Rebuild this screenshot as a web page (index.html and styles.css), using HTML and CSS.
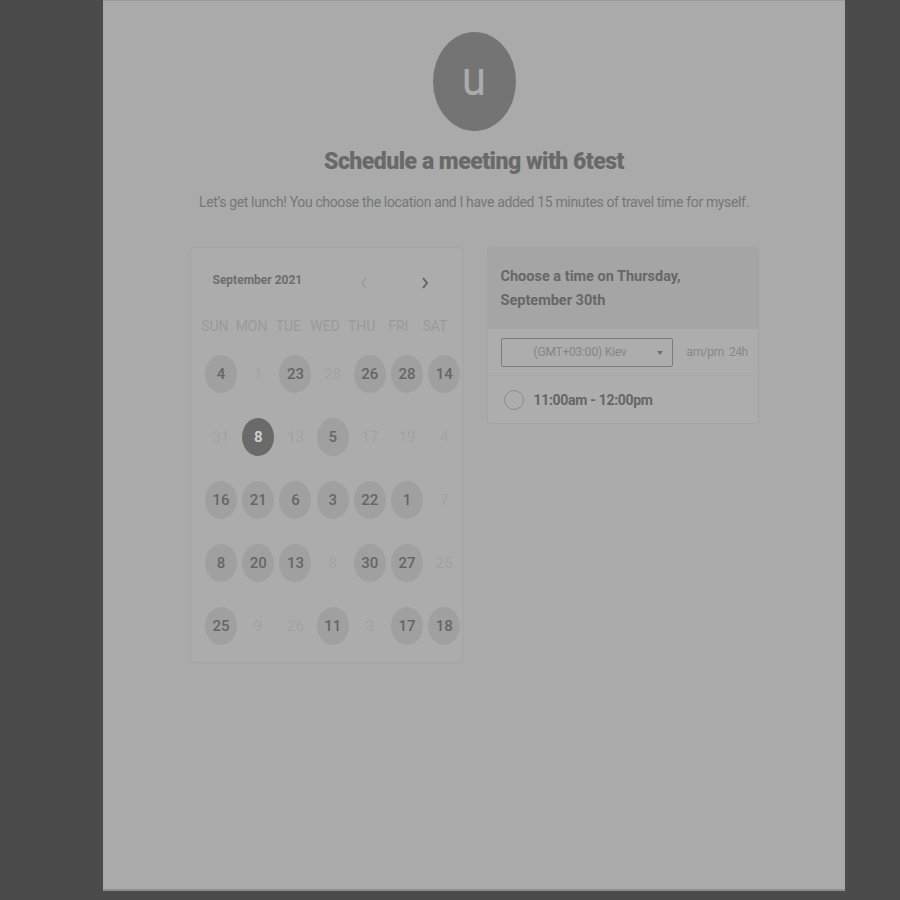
FILE: index.html
```html
<!DOCTYPE html>
<html>
<head>
<meta charset="utf-8">
<link rel="stylesheet" href="styles.css">
</head>
<body>
<div class="panel">
  <div class="avatar"><span>u</span></div>
  <h1 class="title">Schedule a meeting with 6test</h1>
  <p class="subtitle">Let’s get lunch! You choose the location and I have added 15 minutes of travel time for myself.</p>
  <div class="cards">
    <div class="calendar">
      <div class="cal-head">
        <span class="month">September 2021</span>
        <span class="nav prev"><svg width="10" height="14" viewBox="0 0 10 14"><path d="M7 2 L3 7 L7 12" fill="none" stroke="currentColor" stroke-width="1.6"/></svg></span>
        <span class="nav next"><svg width="10" height="14" viewBox="0 0 10 14"><path d="M3 2 L7 7 L3 12" fill="none" stroke="currentColor" stroke-width="2"/></svg></span>
      </div>
      <div class="grid weekdays">
        <span>SUN</span><span>MON</span><span>TUE</span><span>WED</span><span>THU</span><span>FRI</span><span>SAT</span>
      </div>
      <div class="grid days">
        <span class="d on">4</span><span class="d">1</span><span class="d on">23</span><span class="d">28</span><span class="d on">26</span><span class="d on">28</span><span class="d on">14</span>
        <span class="d">31</span><span class="d sel">8</span><span class="d">13</span><span class="d on">5</span><span class="d">17</span><span class="d">19</span><span class="d">4</span>
        <span class="d on">16</span><span class="d on">21</span><span class="d on">6</span><span class="d on">3</span><span class="d on">22</span><span class="d on">1</span><span class="d">7</span>
        <span class="d on">8</span><span class="d on">20</span><span class="d on">13</span><span class="d">8</span><span class="d on">30</span><span class="d on">27</span><span class="d">25</span>
        <span class="d on">25</span><span class="d">9</span><span class="d">26</span><span class="d on">11</span><span class="d">3</span><span class="d on">17</span><span class="d on">18</span>
      </div>
    </div>
    <div class="times">
      <div class="times-head">Choose a time on Thursday,<br>September 30th</div>
      <div class="controls">
        <div class="select"><span>(GMT+03:00) Kiev</span><span class="caret"></span></div>
        <span class="fmt">am/pm&nbsp;&nbsp;24h</span>
      </div>
      <div class="slot">
        <span class="radio"></span>
        <span class="slot-text">11:00am - 12:00pm</span>
      </div>
    </div>
  </div>
</div>
</body>
</html>
```
FILE: styles.css
```css
html, body { margin: 0; padding: 0; }
body {
  background: #4b4b4b;
  font-family: Roboto, "Liberation Sans", sans-serif;
  width: 900px;
  height: 900px;
  overflow: hidden;
}
.panel {
  margin-left: 103px;
  width: 742px;
  height: 891px;
  background: #aaaaaa;
  border-top: 1px solid #9a9a9a;
  border-bottom: 2px solid #8f8f8f;
  box-sizing: border-box;
  padding-top: 31px;
  display: flex;
  flex-direction: column;
  align-items: center;
}
.avatar {
  width: 83px;
  height: 99px;
  border-radius: 50%;
  background: #747474;
  display: flex;
  align-items: center;
  justify-content: center;
}
.avatar span {
  color: #ababab;
  font-size: 44px;
  line-height: 1;
  margin-top: -8px;
  transform: scaleY(1.1);
}
.title {
  margin: 19px 0 0;
  font-size: 23px;
  font-weight: 900;
  color: #696969;
  line-height: 24px;
  letter-spacing: -0.5px;
}
.subtitle {
  margin: 20px 0 0;
  font-size: 14px;
  color: #777;
  line-height: 16px;
  letter-spacing: -0.35px;
}
.cards {
  margin-top: 38px;
  display: flex;
  gap: 26px;
  align-items: flex-start;
}
.calendar {
  width: 271px;
  height: 414px;
  box-sizing: border-box;
  background: #acacac;
  border-radius: 3px;
  box-shadow: 0 0 2px rgba(0,0,0,0.12);
  padding: 22px 0 0 12px;
}
.cal-head {
  display: flex;
  align-items: center;
  height: 20px;
}
.month {
  margin-left: 10px;
  font-size: 12px;
  font-weight: 700;
  color: #6e6e6e;
  width: 146px;
}
.nav { display: flex; align-items: center; margin-top: 6px; }
.prev { color: #9a9a9a; margin-right: 51px; }
.next { color: #666; }
.grid {
  display: grid;
  grid-template-columns: repeat(7, 37.2px);
}
.weekdays {
  margin-top: 26px;
  margin-left: -6px;
  grid-template-columns: repeat(7, 36.7px);
  height: 20px;
  align-items: center;
}
.weekdays span {
  text-align: center;
  font-size: 14px;
  color: #9a9a9a;
  letter-spacing: -0.1px;
}
.days {
  margin-top: 6px;
  grid-auto-rows: 63px;
  align-items: center;
  justify-items: center;
}
.d {
  width: 32px;
  height: 38px;
  border-radius: 50%;
  display: flex;
  align-items: center;
  justify-content: center;
  font-size: 15px;
  color: #a2a2a2;
}
.d.on {
  background: #a0a0a0;
  color: #666;
  font-weight: 500;
}
.d.sel {
  background: #6a6a6a;
  color: #cfcfcf;
  font-weight: 700;
}
.times {
  width: 270px;
  background: #adadad;
  border-radius: 3px;
  box-shadow: 0 0 2px rgba(0,0,0,0.12);
  overflow: hidden;
}
.times-head {
  background: #a5a5a5;
  padding: 17px 13px 16px;
  font-size: 14.5px;
  font-weight: 700;
  color: #676767;
  line-height: 24px;
}
.controls {
  height: 47px;
  display: flex;
  align-items: center;
  padding-left: 13px;
  box-sizing: border-box;
  border-bottom: 1px solid #a8a8a8;
}
.select {
  width: 172px;
  height: 29px;
  box-sizing: border-box;
  border: 1px solid #7c7c7c;
  border-radius: 2px;
  display: flex;
  align-items: center;
  padding-left: 32px;
  font-size: 12px;
  color: #858585;
  letter-spacing: -0.2px;
  position: relative;
}
.caret {
  position: absolute;
  right: 9px;
  top: 12px;
  width: 0;
  height: 0;
  border-left: 3px solid transparent;
  border-right: 3px solid transparent;
  border-top: 4px solid #707070;
}
.fmt {
  margin-left: 14px;
  font-size: 12px;
  color: #888;
  letter-spacing: -0.4px;
}
.slot {
  height: 47px;
  display: flex;
  align-items: center;
  padding-left: 16px;
}
.radio {
  width: 20px;
  height: 20px;
  box-sizing: border-box;
  border: 1.5px solid #8c8c8c;
  border-radius: 50%;
}
.slot-text {
  margin-left: 10px;
  font-size: 14px;
  font-weight: 700;
  color: #666;
  letter-spacing: -0.3px;
}
```
